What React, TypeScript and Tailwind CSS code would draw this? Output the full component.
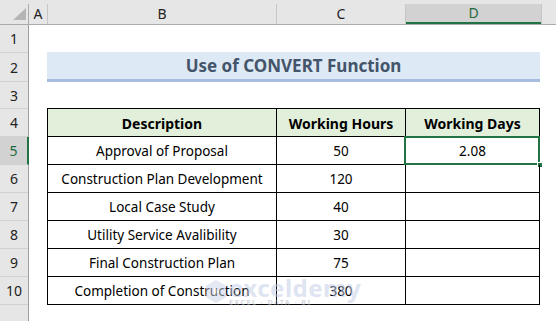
const ROWS = [
  { desc: "Approval of Proposal", hours: "50", days: "2.08" },
  { desc: "Construction Plan Development", hours: "120", days: "" },
  { desc: "Local Case Study", hours: "40", days: "" },
  { desc: "Utility Service Avalibility", hours: "30", days: "" },
  { desc: "Final Construction Plan", hours: "75", days: "" },
  { desc: "Completion of Construction", hours: "380", days: "" },
];

const ROW_HEADS = [
  { n: "1", h: "h-[28px]" },
  { n: "2", h: "h-[29px]" },
  { n: "3", h: "h-[27px]" },
  { n: "4", h: "h-[28px]" },
  { n: "5", h: "h-[28px]", active: true },
  { n: "6", h: "h-[28px]" },
  { n: "7", h: "h-[28px]" },
  { n: "8", h: "h-[28px]" },
  { n: "9", h: "h-[28px]" },
  { n: "10", h: "h-[28px]" },
  { n: "", h: "h-[28px]" },
];

const uiFont = { fontFamily: '"Noto Sans", "Open Sans", sans-serif' };

export default function App() {
  return (
    <div className="w-[556px] h-[321px] overflow-hidden bg-white relative" style={uiFont}>
      {/* column headers */}
      <div className="flex h-[25px] bg-[#e6e6e6] border-b border-[#ababab] text-[14px] text-[#222]">
        <div className="w-[29px] border-r border-[#ababab] flex items-end justify-end pr-[2px] pb-[4px] mt-[4px]">
          <div className="w-0 h-0 border-l-[13px] border-l-transparent border-b-[12px] border-b-[#b5b5b5]" />
        </div>
        <div className="w-[19px] mt-[4px] border-r border-[#c6c6c6] flex items-center justify-center leading-none">A</div>
        <div className="w-[229px] mt-[4px] border-r border-[#c6c6c6] flex items-center justify-center leading-none">B</div>
        <div className="w-[129px] mt-[4px] border-r border-[#c6c6c6] flex items-center justify-center leading-none">C</div>
        <div className="w-[135px] mt-[4px] bg-[#d2d2d2] border-b-2 border-[#217346] flex items-center justify-center leading-none text-[#1e6a3e]">D</div>
        <div className="flex-1 mt-[4px] border-l border-[#c6c6c6]" />
      </div>

      <div className="flex">
        {/* row headers */}
        <div className="w-[29px] flex flex-col bg-[#e6e6e6] border-r border-[#9e9e9e] text-[14px] text-[#222]">
          {ROW_HEADS.map((r) => (
            <div
              key={r.n + r.h}
              className={`${r.h} flex items-center justify-center border-b border-[#d0d0d0] ${
                r.active ? "bg-[#d2d2d2] text-[#1e6a3e] border-r-2 border-r-[#217346] -mr-px" : ""
              }`}
            >
              {r.n}
            </div>
          ))}
        </div>

        {/* sheet area */}
        <div className="flex flex-col pl-[18px]">
          <div className="h-[27px]" />
          <div className="w-[493px] h-[30px] bg-[#dde9f5] border-b-[3px] border-[#a7bde0] flex items-center justify-center">
            <span className="text-[17px] font-bold text-[#44546a]">Use of CONVERT Function</span>
          </div>
          <div className="h-[26px]" />

          <div className="flex flex-col border-t border-l border-black w-[493px] text-[13.5px] text-black">
            <div className="flex h-[28px] bg-[#e2efda] font-bold text-[14px]">
              <div className="w-[229px] border-r border-b border-black flex items-center justify-center pt-[1px]">Description</div>
              <div className="w-[129px] border-r border-b border-black flex items-center justify-center pt-[1px]">Working Hours</div>
              <div className="w-[134px] border-r border-b border-black flex items-center justify-center pt-[1px]">Working Days</div>
            </div>
            {ROWS.map((r, i) => (
              <div key={r.desc} className="flex h-[28px]">
                <div className="w-[229px] border-r border-b border-black flex items-center justify-center pt-[2px]">{r.desc}</div>
                <div className="w-[129px] border-r border-b border-black flex items-center justify-center pt-[2px]">{r.hours}</div>
                <div className="w-[134px] border-r border-b border-black flex items-center justify-center pt-[2px] relative">
                  {r.days}
                  {i === 0 && (
                    <>
                      <div className="absolute -left-[2px] -top-[1px] -right-px -bottom-px border-2 border-[#217346]" />
                      <div className="absolute -right-[4px] -bottom-[4px] w-[6px] h-[6px] bg-[#217346] border border-white" />
                    </>
                  )}
                </div>
              </div>
            ))}
          </div>
        </div>
      </div>

      {/* watermark */}
      <div className="absolute left-[206px] top-[277px] flex items-center gap-[3px] opacity-50 pointer-events-none">
        <svg width="20" height="23" viewBox="0 0 20 23">
          <polygon points="10,0 20,5.75 20,17.25 10,23 0,17.25 0,5.75" fill="#c9d3e8" />
          <polygon points="8,7 14,11.5 8,16" fill="#ffffff" />
        </svg>
        <div className="flex flex-col leading-none">
          <span className="text-[24px] font-bold text-[#bfcbe4] tracking-[0.5px] leading-[22px]">exceldemy</span>
          <span className="text-[7px] text-[#a9b3c4] tracking-[1.5px] font-bold">EXCEL · DATA · BI</span>
        </div>
      </div>
    </div>
  );
}
